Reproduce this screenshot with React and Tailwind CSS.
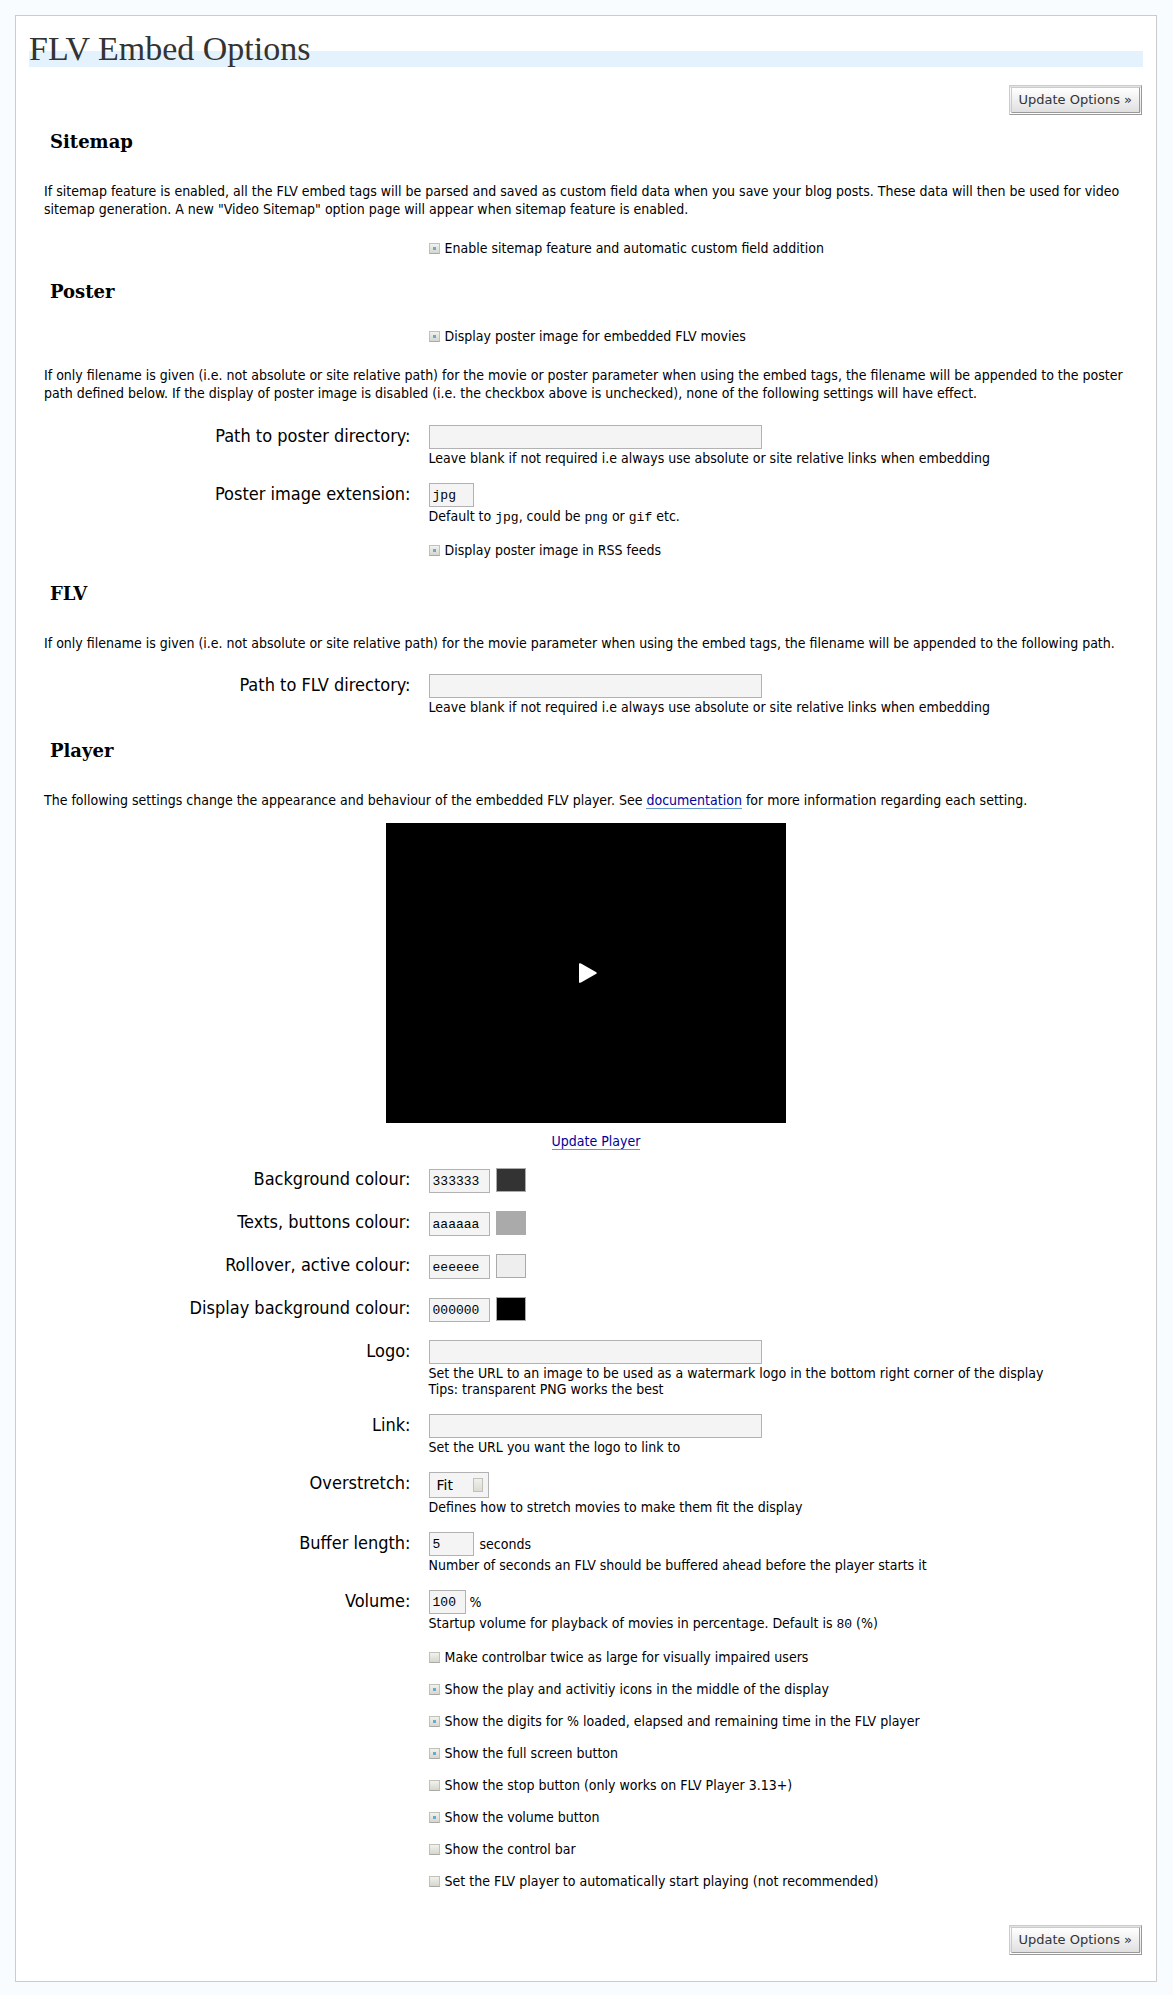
import React from "react";

const inputClass =
  "block h-6 border border-[#b2b2b2] bg-[#f4f4f4] px-[3px] font-['Liberation_Mono',monospace] text-[13px] text-black";
const linkClass = "border-b border-[#6699cc] text-[#00019b]";

function UpdateButton() {
  return (
    <button
      type="submit"
      className="block h-[30px] border-[3px] border-double border-t-[#ccc] border-r-[#999] border-b-[#999] border-l-[#ccc] bg-linear-to-b from-white to-[#e0e0e0] px-[7px] font-['DejaVu_Sans',sans-serif] text-[13px] leading-6 text-[#333]"
    >
      Update Options »
    </button>
  );
}

function Heading({ children }) {
  return (
    <h3 className="pl-1.5 font-['DejaVu_Serif',serif] text-lg leading-7 font-bold">
      {children}
    </h3>
  );
}

function Row({ id, label, help, children }) {
  return (
    <div className="grid grid-cols-[34%_1fr] gap-x-4">
      <label htmlFor={id} className="pr-0.5 text-right text-lg leading-[22px]">
        {label}
      </label>
      <div>
        {children}
        {help && <p className="mt-px leading-4">{help}</p>}
      </div>
    </div>
  );
}

function TextRow({ id, label, help }) {
  return (
    <Row id={id} label={label} help={help}>
      <input id={id} type="text" className={`${inputClass} w-[333px] max-w-full`} />
    </Row>
  );
}

function Check({ id, checked, children }) {
  return (
    <div className="grid grid-cols-[34%_1fr] gap-x-4">
      <div className="col-start-2 flex items-center gap-[5px]">
        <input
          id={id}
          type="checkbox"
          defaultChecked={checked}
          className="grid size-[11px] shrink-0 appearance-none place-items-center border border-[#c1c1b9] border-b-[#aaaaa4] bg-linear-to-b from-[#f2f2ee] to-[#d6d6ce] before:size-[3px] checked:before:bg-[#62aed2]"
        />
        <label htmlFor={id} className="leading-4">
          {children}
        </label>
      </div>
    </div>
  );
}

const colours = [
  { id: "bg", label: "Background colour:", value: "333333", swatch: "bg-[#333333]" },
  { id: "fg", label: "Texts, buttons colour:", value: "aaaaaa", swatch: "bg-[#aaaaaa]" },
  { id: "roll", label: "Rollover, active colour:", value: "eeeeee", swatch: "bg-[#eeeeee]" },
  { id: "disp", label: "Display background colour:", value: "000000", swatch: "bg-black" },
];

const toggles = [
  ["large", false, "Make controlbar twice as large for visually impaired users"],
  ["icons", true, "Show the play and activitiy icons in the middle of the display"],
  ["digits", true, "Show the digits for % loaded, elapsed and remaining time in the FLV player"],
  ["fullscreen", true, "Show the full screen button"],
  ["stop", false, "Show the stop button (only works on FLV Player 3.13+)"],
  ["volbtn", true, "Show the volume button"],
  ["controlbar", false, "Show the control bar"],
  ["autostart", false, "Set the FLV player to automatically start playing (not recommended)"],
];

const leaveBlank =
  "Leave blank if not required i.e always use absolute or site relative links when embedding";

function Code({ children }) {
  return (
    <code className="font-['Liberation_Mono',monospace] text-[13px] leading-none">{children}</code>
  );
}

export default function App() {
  return (
    <div className="min-h-screen bg-[#f9fcff] pt-[15px] pr-4 pb-3 pl-[15px] font-['DejaVu_Sans_Condensed','DejaVu_Sans',sans-serif] text-sm text-black">
      <main className="border border-[#ccc] bg-white px-[13px] pt-[15px] pb-[26px]">
        <h2 className="bg-linear-to-b from-transparent from-[20px] to-[#e4f2fd] to-[20px] font-['Liberation_Serif',serif] text-[34px] leading-9 text-[#333]">
          FLV Embed Options
        </h2>

        <form onSubmit={(e) => e.preventDefault()}>
          <div className="mt-[18px] flex justify-end pr-px">
            <UpdateButton />
          </div>

          <div className="mt-[13px] px-[15px]">
            <section>
              <Heading>Sitemap</Heading>
              <p className="mt-[26px] mb-[22px] leading-[18px]">
                If sitemap feature is enabled, all the FLV embed tags will be parsed and saved as
                custom field data when you save your blog posts. These data will then be used for
                video sitemap generation. A new "Video Sitemap" option page will appear when
                sitemap feature is enabled.
              </p>
              <Check id="sitemap" checked>
                Enable sitemap feature and automatic custom field addition
              </Check>
            </section>

            <section className="mt-[22px]">
              <Heading>Poster</Heading>
              <div className="mt-[22px]">
                <Check id="poster" checked>
                  Display poster image for embedded FLV movies
                </Check>
              </div>
              <p className="mt-[22px] mb-[23px] leading-[18px]">
                If only filename is given (i.e. not absolute or site relative path) for the movie
                or poster parameter when using the embed tags, the filename will be appended to
                the poster path defined below. If the display of poster image is disabled (i.e.
                the checkbox above is unchecked), none of the following settings will have effect.
              </p>
              <div className="flex flex-col gap-[17px]">
                <TextRow id="posterdir" label="Path to poster directory:" help={leaveBlank} />
                <Row
                  id="ext"
                  label="Poster image extension:"
                  help={
                    <>
                      Default to <Code>jpg</Code>, could be <Code>png</Code> or <Code>gif</Code>{" "}
                      etc.
                    </>
                  }
                >
                  <input
                    id="ext"
                    type="text"
                    defaultValue="jpg"
                    className={`${inputClass} w-[45px]`}
                  />
                </Row>
              </div>
              <div className="mt-[18px]">
                <Check id="rss" checked>
                  Display poster image in RSS feeds
                </Check>
              </div>
            </section>

            <section className="mt-[22px]">
              <Heading>FLV</Heading>
              <p className="mt-[26px] mb-[22px] leading-[18px]">
                If only filename is given (i.e. not absolute or site relative path) for the movie
                parameter when using the embed tags, the filename will be appended to the
                following path.
              </p>
              <TextRow id="flvdir" label="Path to FLV directory:" help={leaveBlank} />
            </section>

            <section className="mt-[22px]">
              <Heading>Player</Heading>
              <p className="mt-[26px] mb-3.5 leading-[18px]">
                The following settings change the appearance and behaviour of the embedded FLV
                player. See{" "}
                <a href="#documentation" className={linkClass}>
                  documentation
                </a>{" "}
                for more information regarding each setting.
              </p>
              <button
                type="button"
                aria-label="Play"
                className="mx-auto flex h-[300px] w-[400px] max-w-full items-center justify-center bg-black"
              >
                <svg width="20" height="20" viewBox="0 0 20 20" className="ml-1" fill="#fff">
                  <path d="M1 0.8Q1 0 2 0.2L3 0.5L18.3 9.2Q19.4 10 18.3 10.8L3 19.5L2 19.8Q1 20 1 19.2Z" />
                </svg>
              </button>
              <p className="mt-[9px] mb-[18px] pl-5 text-center leading-[18px]">
                <a href="#update" className={linkClass}>
                  Update Player
                </a>
              </p>

              <div className="flex flex-col gap-[17px]">
                {colours.map((c) => (
                  <Row key={c.id} id={c.id} label={c.label}>
                    <div className="flex h-[26px] items-start gap-1.5">
                      <input
                        id={c.id}
                        type="text"
                        defaultValue={c.value}
                        className={`${inputClass} mt-px w-[61px]`}
                      />
                      <span className={`h-6 w-[30px] border border-[#aaa] ${c.swatch}`} />
                    </div>
                  </Row>
                ))}
                <TextRow
                  id="logo"
                  label="Logo:"
                  help={
                    <>
                      Set the URL to an image to be used as a watermark logo in the bottom right
                      corner of the display
                      <br />
                      Tips: transparent PNG works the best
                    </>
                  }
                />
                <TextRow id="link" label="Link:" help="Set the URL you want the logo to link to" />
                <Row
                  id="stretch"
                  label="Overstretch:"
                  help="Defines how to stretch movies to make them fit the display"
                >
                  <div className="relative h-[26px] w-[60px]">
                    <select
                      id="stretch"
                      className="block size-full appearance-none border border-[#b2b2b2] bg-[#f4f4f4] pl-[7px] font-['DejaVu_Sans',sans-serif] text-sm"
                    >
                      <option>Fit</option>
                    </select>
                    <span className="pointer-events-none absolute top-1.5 right-1.5 h-3.5 w-2.5 border border-[#c1c1b9] bg-linear-to-b from-[#f0f0ec] to-[#dcdcd4]" />
                  </div>
                </Row>
                <Row
                  id="buffer"
                  label="Buffer length:"
                  help="Number of seconds an FLV should be buffered ahead before the player starts it"
                >
                  <div className="flex items-center gap-1.5">
                    <input
                      id="buffer"
                      type="text"
                      defaultValue="5"
                      className={`${inputClass} w-[45px]`}
                    />
                    <span>seconds</span>
                  </div>
                </Row>
                <Row
                  id="volume"
                  label="Volume:"
                  help={
                    <>
                      Startup volume for playback of movies in percentage. Default is{" "}
                      <Code>80</Code> (%)
                    </>
                  }
                >
                  <div className="flex items-center gap-1">
                    <input
                      id="volume"
                      type="text"
                      defaultValue="100"
                      className={`${inputClass} w-[37px]`}
                    />
                    <span>%</span>
                  </div>
                </Row>
              </div>
              <div className="mt-[18px] flex flex-col gap-4">
                {toggles.map(([id, on, text]) => (
                  <Check key={id} id={id} checked={on}>
                    {text}
                  </Check>
                ))}
              </div>
            </section>
          </div>

          <div className="mt-9 flex justify-end pr-px">
            <UpdateButton />
          </div>
        </form>
      </main>
    </div>
  );
}
